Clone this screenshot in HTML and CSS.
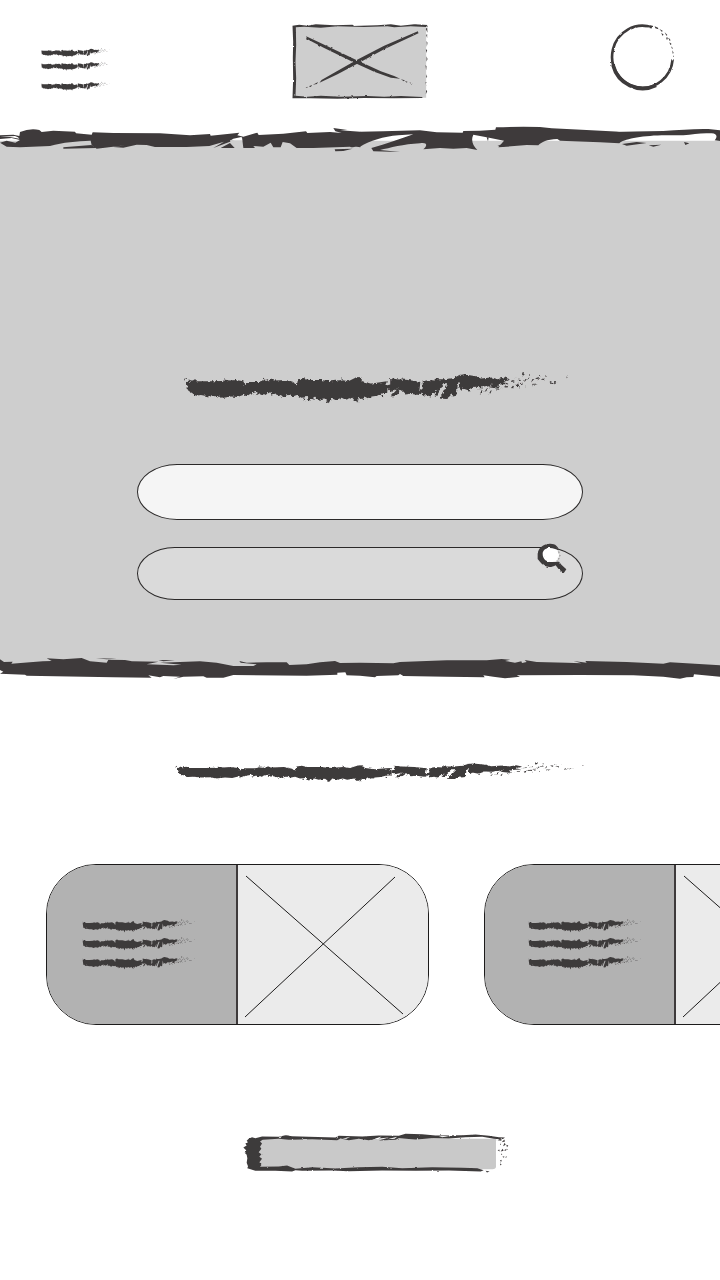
FILE: index.html
```
<!DOCTYPE html>
<html lang="en">
<head>
<meta charset="utf-8">
<meta name="viewport" content="width=device-width, initial-scale=1">
<title>Wireframe</title>
<link rel="stylesheet" href="styles.css">
</head>
<body>
<svg class="defs" aria-hidden="true">
  <defs>
    <filter id="rough" x="-5%" y="-20%" width="110%" height="140%">
      <feTurbulence type="fractalNoise" baseFrequency="0.12" numOctaves="3" seed="4"/>
      <feDisplacementMap in="SourceGraphic" scale="12" xChannelSelector="R" yChannelSelector="G"/>
    </filter>
    <filter id="grain" x="-5%" y="-10%" width="110%" height="120%">
      <feTurbulence type="fractalNoise" baseFrequency="0.08" numOctaves="2" seed="9"/>
      <feDisplacementMap in="SourceGraphic" scale="6" xChannelSelector="R" yChannelSelector="G"/>
    </filter>
    <symbol id="stroke" viewBox="30 20 1145 100" preserveAspectRatio="none">
      <g filter="url(#rough)">
      <path d="M37 52 45 42 50 50 62 42 66 48 110 48 145 47 150 43 165 46 185 44 207 48 212 60 222 50 250 50 268 46 285 48 290 40 298 46 335 44 358 52 366 64 370 42 385 38 400 44 440 44 470 48 500 44 520 48 540 38 552 35 562 48 590 55 620 50 635 48 630 62 645 58 645 38 665 42 700 44 735 50 732 78 742 70 742 48 760 44 780 46 782 36 790 42 810 42 835 38 850 30 865 27 900 33 915 40 950 37 965 42 985 36 1002 42 984 50 1000 56 970 58 966 71 940 66 952 58 915 66 897 65 880 76 862 70 856 78 848 52 842 92 832 94 828 88 812 102 794 100 802 80 816 54 806 54 784 92 776 90 789 70 780 78 766 94 752 90 744 94 738 82 728 90 706 86 690 88 676 74 660 92 646 94 668 70 646 78 637 68 636 84 622 84 606 92 590 94 580 100 568 94 562 106 552 98 542 110 532 98 512 104 500 98 484 104 470 98 462 114 450 100 432 104 420 98 404 108 396 96 380 98 366 90 355 94 342 90 325 96 305 88 290 92 292 78 272 90 258 84 244 92 250 80 228 86 216 94 210 88 190 96 170 94 145 99 130 93 105 94 80 90 66 92 52 82 44 84Z"/>
      <path d="M32 38l4 3-3 6zM262 44l8-4-2 6zM275 43l6-1-1 5zM498 41l5-3 1 6zM678 40l5-3-1 5zM455 112l7 3-4-8zM545 112l4-6 4 5zM618 96l5-6 1 6zM386 106l3-7 3 5zM908 74l10-8-2 8zM912 85l8-9-1 8zM926 80l9-12 2 8zM940 86l4-9 5-1zM960 72l18-4-10 6zM985 66l12-6-2 7zM1004 70l10-12-2 12zM1018 62l9-7 1 8zM1002 50l10-6 4 5zM1020 48l9-8 4 2zM1014 38l6-3 1 4zM1036 34l4-14 6 8zM1030 56l8-6 2 6zM1042 54l6-13 4 2zM1053 44l6-7 4 3zM1065 52l5-12 4 2zM1068 64l6-9 3 2zM1080 38l7-2 2 8zM1076 58l5-5 3 4zM1090 30l6-1 2 7zM1094 42l8-2 4 6zM1105 36l4-3 1 5zM1116 56l10-7 4 2-8 5zM1131 51l13-1-10 4zM1170 34l4 2-2 3zM1026 70l4-5 2 4zM1058 30l3-4 2 5zM1048 66l4-4 1 4z"/>
      </g>
    </symbol>
  </defs>
</svg>

<header class="header">
  <button class="icon-button menu" type="button" aria-label="Menu">
    <svg width="69" height="43" viewBox="35 38 206 128">
      <use href="#stroke" x="35" y="38" width="205" height="29"/>
      <use href="#stroke" x="35" y="78" width="205" height="29"/>
      <use href="#stroke" x="35" y="138" width="205" height="29"/>
    </svg>
  </button>
  <a class="logo" href="#" aria-label="Home">
    <svg width="137" height="76" viewBox="24 24 410 228">
      <path class="logo-fill" d="M30 32H426V248H30Z"/>
      <g filter="url(#grain)">
      <path d="M25 32 45 29 70 32 95 28 150 31 205 29 210 33 280 31 320 28 350 32 390 28 430 30 426 36 380 34 330 37 310 34 240 36 160 34 110 38 60 35 35 37 36 90 34 140 36 190 34 242 70 245 110 242 170 245 250 243 300 245 350 243 415 246 414 249 330 250 240 249 160 251 80 250 25 250 27 190 26 130 27 80Z"/>
      <path d="M66 64 130 94 218 136 290 169 330 183 348 191 320 188 270 170 214 145 120 99 67 71ZM401 49 403 55 300 103 222 145 160 178 106 203 112 195 150 173 216 136 300 92Z"/>
      <path d="M350 193l12 3-3 3zM362 198l8 2-2 3zM376 202l10 4-8-1zM86 209l16-8-4 6zM74 214l10-4-4 6zM64 218l8-3-4 4zM425 42l4-5 1 16zM426 60l3-3v12zM427 78l3 5-2 12zM425 102l4 4-2 8zM427 124l3 8-3 8zM424 150l3 4-1 12zM427 178l2 7-3 4zM424 200l4 4-2 8zM426 224l3 5-4 9z"/>
      </g>
    </svg>
  </a>
  <button class="icon-button" type="button" aria-label="Profile">
    <svg width="65" height="68" viewBox="30 24 195 204">
      <g filter="url(#grain)">
        <path class="ring" d="M218 133A91 93 0 1 1 156 37"/>
        <path class="ring ring-heavy" d="M168 211A92 94 0 0 1 39 150"/>
        <path d="M164 34l10 4 1 5-9-3zM178 42l10 5-2 4zM184 53l7 6-4 3zM194 52l8 8-3 2zM198 66l6 6-4 2zM206 68l6 8-4 1zM208 82l7 5-4 3zM213 94l6 6-3 1zM217 106l4 8-3 2zM219 120l3 6-2 2z"/>
        <path class="paper" d="M84 50l10-10-2 12zM98 46l9-10-1 12zM62 70l9-10-2 10zM132 40l18-3-6 6zM72 58l6-5v7z"/>
      </g>
    </svg>
  </button>
</header>

<main>
  <section class="hero">
    <svg class="edge" height="40" viewBox="0 0 2160 120" preserveAspectRatio="none" aria-hidden="true">
      <path class="ground" d="M0 62H2160V121H0Z"/>
      <g transform="scale(2 1)">
      <path d="M0 46 40 44 58 48 60 36Q90 24 118 30L125 36 160 32 225 35 228 40 275 44 278 37 340 39 480 40 570 46 630 42 632 47 718 38 712 46 730 50 772 38 776 45 850 41 918 34 922 39 990 36 1025 39 1006 34 1000 24 1042 30 1020 31 1081 35V82C1064 76 1058 86 1050 80L940 84 890 84 870 70 848 66 842 82 820 82 812 68 790 80 760 78 765 84 730 84 726 52 640 84 672 65 628 78 560 81 465 81 440 75 410 74 370 83 340 81 376 76 290 86 275 76 272 62C230 64 190 66 150 78L60 82 20 80 0 68 20 62 46 68 60 60 35 54 0 57Z" transform="scale(.5 1)" />
      </g>
      <path class="paper" d="M0 50 45 48 54 52 58 56 30 51ZM700 56 724 51 726 61 690 62Z"/>
      <path class="ground" d="M690 61H726V76L710 84 692 69Z"/>
      <path d="M190 82 274 75 290 84 190 86ZM662 84 690 69 704 84ZM1004 88 1058 86 1030 93 1006 94Z"/>
      <g transform="translate(1080 0)">
        <path d="M0 35 70 34 180 31 230 37 308 38 310 33 360 32 406 29 408 22Q480 19 540 21L575 25 665 29 780 35 910 33C960 30 1000 26 1045 27L1081 31V63L1064 61C1074 50 1070 41 1055 40C1025 38 1000 42 970 46L905 46C840 48 790 58 778 70L720 67 600 62 592 57C560 58 545 66 535 76L500 75 440 80 415 82 432 62 380 52 340 44C332 60 338 76 352 90L320 84 280 86 240 84 190 88C200 80 206 66 180 70C130 72 90 84 60 90L120 96 40 94 34 84C80 72 120 56 160 43L115 46C70 50 30 62 0 80Z"/>
        <path class="paper" d="M780 30 740 28 775 34 830 33Z"/>
        <path d="M380 52 386 52 384 64ZM412 78 428 72 434 80ZM786 72 830 66 860 69 800 77ZM866 76 904 74 880 80ZM972 66 988 70 976 75Z"/>
      </g>
    </svg>
    <form class="search">
      <svg class="search-title" height="33" viewBox="0 0 382 33" preserveAspectRatio="none" aria-hidden="true"><use href="#stroke" width="382" height="33"/></svg>
      <input class="field field-light" type="text" aria-label="Location">
      <div class="field-wrap">
        <input class="field field-dark" type="search" aria-label="Search">
        <button class="icon-button search-button" type="submit" aria-label="Submit search">
          <svg width="30" height="30" viewBox="112 278 90 90">
            <circle class="paper" cx="151" cy="314" r="27"/>
            <g filter="url(#grain)">
            <path d="M114 310C116 294 128 281 150 280C166 279 176 288 178 300L166 296C148 289 131 295 129 308C128 328 142 336 158 335L178 334 186 344 200 357 192 369 176 355 168 345C150 356 130 348 122 336L114 326Z"/>
            </g>
            <path class="speck" d="M174 302l7 3-4 5zM178 313l6 2-4 5zM174 322l7 2-5 5zM170 330l7 2-4 4z"/>
          </svg>
        </button>
      </div>
    </form>
    <svg class="edge" height="35" viewBox="0 0 2160 105" preserveAspectRatio="none" aria-hidden="true">
      <path class="ground" d="M0 -1H2160V55H0Z"/>
      <path d="M0 28 12 36 38 35 34 41 90 37 128 34 155 33 140 25 190 28 245 24 270 34 320 38 325 29 375 30 396 34 475 35 440 43 520 46 545 44 480 38 600 34Q650 36 700 48L760 48 770 43 722 38 718 33 740 38 800 37 860 37 868 45 920 43 960 37 1005 33 1020 39 1080 38 1180 40 1200 36 1340 31 1460 31 1505 27 1530 29 1515 33 1545 38 1564 34 1566 39 1580 36 1574 30 1610 36 1700 38 1745 40 1720 33 1760 38 1756 33 1880 36 1990 41 2010 37 2060 40 2160 46V80L2082 73 2080 81 2060 82 2040 86 1990 80 1900 76 1740 75 1550 76 1560 80 1515 85 1480 80 1450 76 1454 82 1340 80 1210 78 1200 72 1195 76 1130 78 1125 82 1080 77 1040 76 1036 67 1012 68 1012 74 920 77 700 75 670 83 620 83 610 79 550 80 520 87 540 80 490 78 480 82 445 76 455 83 340 82 80 77 75 74 0 71 10 65 0 60Z"/>
      <path d="M288 25 350 26 320 28ZM475 30 525 31 490 34Z"/>
    </svg>
  </section>

  <section class="listing">
    <svg class="listing-title" width="409" height="21" viewBox="0 0 409 21" aria-hidden="true"><use href="#stroke" width="409" height="21"/></svg>
    <div class="cards">
      <article class="card">
        <div class="card-text">
          <svg width="113" height="51" viewBox="0 0 113 51">
            <use href="#stroke" y="0" width="113" height="14"/>
            <use href="#stroke" y="18" width="113" height="14"/>
            <use href="#stroke" y="37" width="113" height="14"/>
          </svg>
        </div>
        <div class="card-image">
          <svg width="190" height="159" viewBox="0 0 190 159"><path class="cross" d="M8 11 165 149M157 12 7 152"/></svg>
        </div>
      </article>
      <article class="card">
        <div class="card-text card-text-wide">
          <svg width="113" height="51" viewBox="0 0 113 51">
            <use href="#stroke" y="0" width="113" height="14"/>
            <use href="#stroke" y="18" width="113" height="14"/>
            <use href="#stroke" y="37" width="113" height="14"/>
          </svg>
        </div>
        <div class="card-image">
          <svg width="190" height="159" viewBox="0 0 190 159"><path class="cross" d="M8 11 165 149M157 12 7 152"/></svg>
        </div>
      </article>
    </div>
    <button class="icon-button action" type="button" aria-label="View more">
      <svg width="267" height="42" viewBox="20 22 800 125">
        <path class="action-fill" d="M50 42H781V125Q781 133 770 133H50Z"/>
        <g filter="url(#grain)">
        <path d="M40 42 50 37 60 40 80 35 130 36 150 31 170 34 220 36 300 38 310 33 380 35 430 32 490 33 510 27 560 28 600 32 680 31 720 29 760 33 790 37 808 38 800 44 775 42 740 36 690 37 640 41 590 40 540 44 490 40 480 45 430 47 460 38 420 42 400 46 370 42 340 46 315 41 305 46 230 43 160 45 130 42 82 45 74 50 80 56 74 66 78 72 70 82 78 88 72 96 80 102 72 112 80 118 74 126 130 125 155 122 180 132 230 127 300 131 370 127 440 126 500 130 590 127 680 129 725 130 744 136 735 140 640 137 540 138 440 137 340 139 290 137 200 138 180 136 170 140 120 138 60 138 36 130 38 124 34 114 36 100 34 90 28 84 34 78 24 68 34 62 30 56 38 52 34 48Z"/>
        <path d="M786 46l8-4 4 6zM798 52l8-8 2 6zM790 60l4-6 2 6zM802 64l5-10 3 6zM812 60l6 2-4 5zM786 76l5-2 1 6zM795 80l6-8 3 6zM805 76l8-4-2 6zM800 96l6-2-1 5zM808 98l4-4 2 3zM792 108l6-3-1 6zM793 116l5 2-4 4zM795 89l3-3 2 4zM750 138l12 2-8 3z"/>
        </g>
        <path class="paper" d="M308 36l-5 8 3-10zM418 42l20-7-10 8zM455 43l30-7-8 6zM610 34l35-1-25 4zM130 37l10-3-6 6zM320 42l25-6-12 6z"/>
      </svg>
    </button>
  </section>
</main>
</body>
</html>
```
FILE: styles.css
```
* { box-sizing: border-box; }

body {
  margin: 0;
  min-height: 100vh;
  background: #fff;
  font-family: "Liberation Sans", Arial, sans-serif;
  overflow-x: hidden;
}

svg { display: block; fill: #3e3a3b; }

.defs { position: absolute; width: 0; height: 0; }
.paper { fill: #fff; }
.ground { fill: #cecece; }
.speck { fill: #a5a3a3; }
.ring { fill: none; stroke: #3e3a3b; stroke-width: 8; }
.ring-heavy { stroke-width: 11; }

.icon-button {
  padding: 0;
  border: 0;
  background: none;
  cursor: pointer;
}

.header {
  display: flex;
  justify-content: space-between;
  align-items: flex-start;
  padding: 23px 45px 21px 41px;
}

.menu { margin-top: 25px; }
.logo-fill { fill: #cecece; }

.hero { background: #cecece; }
.edge { width: 100%; background: #fff; }

.search {
  display: flex;
  flex-direction: column;
  gap: 27px;
  width: 62%;
  margin: 0 auto;
  padding: 212px 0 50px;
}

.search-title {
  width: 86%;
  margin: 0 0 32px 47px;
}

.field-wrap { position: relative; }

.field {
  display: block;
  width: 100%;
  padding: 0 40px;
  border: 1px solid #2b2929;
  border-radius: 40px / 28px;
  font: 18px "Liberation Sans", Arial, sans-serif;
  appearance: none;
  outline: none;
}

.field-light { height: 56px; background: #f5f5f5; }
.field-dark { height: 53px; background: #dadada; }

.search-button {
  position: absolute;
  top: -4px;
  right: 16px;
}

.listing { padding: 77px 0 106px; }
.listing-title { margin: 0 auto; transform: translateX(19px); }

.cards {
  display: flex;
  gap: 55px;
  padding: 81px 0 107px 46px;
  overflow: hidden;
}

.card {
  display: flex;
  flex: none;
  width: 383px;
  border: 1px solid #1c1b1b;
  border-radius: 50px;
  overflow: hidden;
}

.card-text {
  display: flex;
  align-items: center;
  flex: 1;
  padding-left: 35px;
  border-right: 2px solid #3e3a3b;
  background: #b2b2b2;
}

.card-text-wide { padding-left: 43px; }
.card-image { background: #ebebeb; }
.cross { fill: none; stroke: #1c1b1b; }

.action {
  display: block;
  margin: 0 auto;
  padding-left: 30px;
}

.action-fill { fill: #c9c9c9; }
```
